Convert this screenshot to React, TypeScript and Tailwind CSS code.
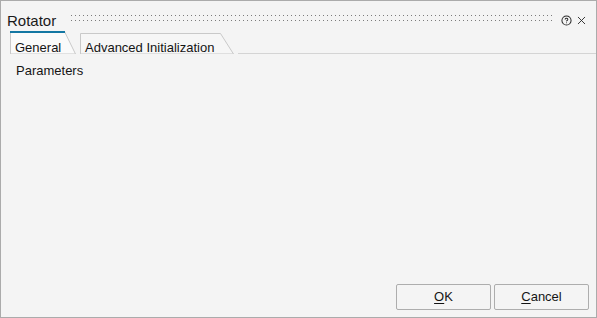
import React from "react";
import { CircleHelp, X } from "lucide-react";

function Tab({ label, active, width }: { label: string; active?: boolean; width: number }) {
    const h = active ? 23 : 21;
    const slant = active ? 11 : 13;
    return (
        <div className={`relative shrink-0 ${active ? "h-[23px] pl-[5px] pt-[4px]" : "h-[21px] pl-[5px] pt-[2px]"}`} style={{ width }}>
            <svg className="absolute left-0 top-0" width={width} height={h}>
                <polygon
                    points={`0.5,${h} 0.5,0.5 ${width - slant - 0.5},0.5 ${width - 0.5},${h}`}
                    fill={active ? "#fafafa" : "#f6f6f6"}
                    stroke="#c9c9c9"
                    strokeWidth="1"
                />
                {active && <line x1="0" y1="1" x2={width - slant} y2="1" stroke="#1477a3" strokeWidth="2" />}
            </svg>
            <span className="relative text-[13px] leading-[15px] text-[#141414]">{label}</span>
        </div>
    );
}

// the dotted drag handle in the title bar
function Grip() {
    return (
        <svg className="flex-1 self-start mt-[4px] ml-[15px] mr-[7px]" height="6">
            <defs>
                <pattern id="grip" width="4" height="5" patternUnits="userSpaceOnUse">
                    <rect x="0" y="0" width="1" height="1" fill="#7c7c7c" />
                </pattern>
            </defs>
            <rect x="0" y="0" width="100%" height="6" fill="url(#grip)" />
        </svg>
    );
}

export default function App() {
    return (
        <div className="w-[597px] h-[318px] border border-[#ababab] bg-[#f4f4f4] flex flex-col font-['Liberation_Sans',Arial,sans-serif]">
            <div className="flex items-center pl-[6px] pr-[8px] pt-[10px] h-[29px]">
                <span className="text-[15px] leading-[18px] text-[#1a1a1a]">Rotator</span>
                <Grip />
                <CircleHelp size={11} strokeWidth={2.2} className="text-[#2a2a2a]" />
                <X size={13} strokeWidth={1.7} className="ml-[3px] text-[#2a2a2a]" />
            </div>
            <div className="flex items-end gap-[4px] pl-[9px] mt-[1px] h-[23px] relative">
                <Tab label="General" active width={66} />
                <Tab label="Advanced Initialization" width={154} />
                <div className="flex-1 h-px bg-[#d4d4d4]" />
            </div>
            <div className="flex-1 pl-[15px] pt-[9px] text-[13px] leading-[15px] text-[#141414]">Parameters</div>
            <div className="flex justify-end gap-[3px] pr-[7px] pb-[7px]">
                <button className="w-[95px] h-[26px] border border-[#adadad] rounded-[2px] bg-[#f4f4f4] text-[13px] text-[#141414]">
                    <span className="underline underline-offset-2">O</span>K
                </button>
                <button className="w-[95px] h-[26px] border border-[#adadad] rounded-[2px] bg-[#f4f4f4] text-[13px] text-[#141414]">
                    <span className="underline underline-offset-2">C</span>ancel
                </button>
            </div>
        </div>
    );
}
